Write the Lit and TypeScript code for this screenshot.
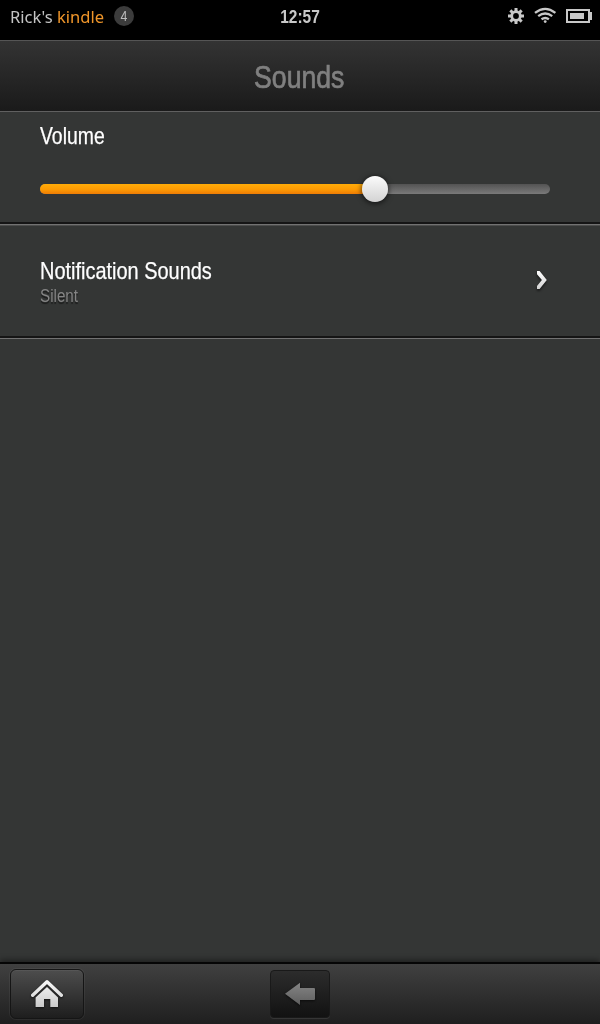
import { LitElement, html, svg, css } from "lit";
import { customElement, property } from "lit/decorators.js";

const CX = 516;
const CY = 16;

const tooth = (degrees: number) => {
  const x = Math.cos((degrees * Math.PI) / 180);
  const y = Math.sin((degrees * Math.PI) / 180);
  return svg`<path d="M${CX + x * 5} ${CY + y * 5}L${CX + x * 8} ${CY + y * 8}"/>`;
};

@customElement("status-bar")
class StatusBar extends LitElement {
  static styles = css`
    :host { display: grid; grid-template-columns: 1fr auto 1fr; height: 40px; background: #000; box-sizing: border-box; }
    .owner { display: flex; align-items: center; height: 33px; padding-left: 10px; font: 17px/33px "Noto Sans", sans-serif; color: #c4c4c4; }
    .name { white-space: pre; width: 104px; transform: scaleX(0.975); transform-origin: left; }
    .brand { color: #f0962a; }
    .count { width: 20px; height: 20px; border-radius: 50%; background: #3c3c3c; color: #bdbdbd; font: 14px/20px "Liberation Sans", sans-serif; text-align: center; margin-top: -1px; }
    .digit { display: inline-block; transform: scaleX(.88); }
    .clock { font: bold 18px/34px "Liberation Sans", sans-serif; color: #c8c8c8; transform: scaleX(0.86); }
    .icons { display: flex; justify-content: flex-end; }
    svg { display: block; }
  `;
  render() {
    return html`
      <div class="owner"><span class="name">Rick's <span class="brand">kindle</span></span><span class="count"><span class="digit">4</span></span></div>
      <div class="clock">12:57</div>
      <div class="icons">
        <svg width="100" height="34" viewBox="500 0 100 34" fill="none" stroke="#c8c8c8">
          <circle cx="516" cy="16" r="4.3" stroke-width="2.8"/>
          <g stroke-width="3">${[0, 45, 90, 135, 180, 225, 270, 315].map(tooth)}</g>
          <path d="M535 12.9Q545.2 4.9 555.4 12.9M538.2 16.2Q545.2 10.8 552.2 16.2M541.5 19.3Q545.2 16.7 548.9 19.3" stroke-width="2.3"/>
          <circle cx="545.2" cy="21.6" r="1.4" fill="#c8c8c8" stroke="none"/>
          <rect x="567" y="10" width="22" height="12" stroke-width="2"/>
          <rect x="570" y="13" width="14" height="6" fill="#c8c8c8" stroke="none"/>
          <rect x="590" y="12" width="2" height="8" fill="#c8c8c8" stroke="none"/>
        </svg>
      </div>`;
  }
}

@customElement("volume-slider")
class VolumeSlider extends LitElement {
  @property({ type: Number }) value = 65.6;
  static styles = css`
    :host { display: block; }
    .track { position: relative; height: 10px; border-radius: 5px; background: linear-gradient(#535353, #7a7a7a); }
    .fill { height: 10px; border-radius: 5px 0 0 5px; background: linear-gradient(#ffac08, #fd9a03 55%, #ee7d05); }
    .knob { position: absolute; top: -8px; width: 26px; height: 26px; margin-left: -13px; border-radius: 50%; background: linear-gradient(#fbfbfb, #d3d3d3); box-shadow: 0 1px 5px 1px rgba(0,0,0,.55); }
  `;
  render() {
    return html`<div class="track"><div class="fill" style="width:${this.value}%"></div><div class="knob" style="left:${this.value}%"></div></div>`;
  }
}

@customElement("nav-bar")
class NavBar extends LitElement {
  static styles = css`
    :host { display: grid; grid-template-columns: 1fr 60px 1fr; height: 62px; box-sizing: border-box; border-top: 2px solid #050505; background: linear-gradient(#404040, #1f1f1f); padding: 5px 10px 5px; box-shadow: 0 -2px 6px rgba(0,0,0,.45); position: relative; }
    .home { width: 74px; height: 50px; box-sizing: border-box; border: 1px solid #151515; border-radius: 6px; background: linear-gradient(#4d4d4d, #1e1e1e); box-shadow: 0 0 0 1px rgba(255,255,255,.05), inset 0 1px rgba(255,255,255,.05); }
    .back { width: 60px; height: 48px; margin-top: 1px; box-sizing: border-box; border: 1px solid #191919; border-radius: 4px; background: linear-gradient(#2c2c2c, #121212); box-shadow: 0 1px rgba(255,255,255,.09); }
    svg { display: block; filter: drop-shadow(0 1px 1px rgba(0,0,0,.6)); }
  `;
  render() {
    return html`
      <div class="home"><svg width="72" height="48" viewBox="11 970 72 48">
        <defs><linearGradient id="h" x1="0" y1="980" x2="0" y2="1007" gradientUnits="userSpaceOnUse"><stop stop-color="#fafafa"/><stop offset="1" stop-color="#cacaca"/></linearGradient></defs>
        <path d="M32.7 995.3L47 981.8L61.3 995.3" fill="none" stroke="url(#h)" stroke-width="3.4" stroke-linecap="round" stroke-linejoin="round"/>
        <path d="M35.6 997.6L47 986.9L58 997.6V1007H50.3V999H44V1007H35.6Z" fill="url(#h)"/>
      </svg></div>
      <div class="back"><svg width="58" height="46" viewBox="271 971 58 46">
        <defs><linearGradient id="b" x1="0" y1="0" x2="0" y2="1"><stop stop-color="#858585"/><stop offset="1" stop-color="#5e5e5e"/></linearGradient></defs>
        <path d="M285 993.8L300 982.7V988H314Q315 988 315 989V999Q315 1000 314 1000H300V1005Z" fill="url(#b)"/>
      </svg></div>`;
  }
}

@customElement("app-root")
class AppRoot extends LitElement {
  static styles = css`
    :host { display: flex; flex-direction: column; width: 600px; height: 1024px; overflow: hidden; background: #343635; font-family: "Liberation Sans", Arial, sans-serif; }
    header { height: 72px; box-sizing: border-box; border-top: 1px solid #555; border-bottom: 1px solid #606060; background: linear-gradient(#333, #1a1a1a); color: #808080; text-align: center; font-size: 32px; line-height: 72px; padding-right: 2px; }
    .squeeze { display: inline-block; white-space: nowrap; transform-origin: left; }
    .heading { transform: scaleX(.832); transform-origin: center; -webkit-text-stroke: .7px #808080; }
    .row { box-sizing: border-box; padding: 0 50px 0 40px; border-bottom: 2px solid #151515; box-shadow: 0 1px #727272; }
    .volume { height: 112px; box-shadow: 0 1px #727272, 0 2px #4c4d4c; }
    .label { font-size: 24px; line-height: 28px; color: #fff; -webkit-text-stroke: .25px #fff; }
    .volume .label { padding: 10px 0 34px; }
    .vol { transform: scaleX(.808); }
    .notif { transform: scaleX(.831); }
    .sub { font-size: 18px; line-height: 22px; color: #858585; text-shadow: 0 2px 1px rgba(0,0,0,.5); }
    .silent { transform: scaleX(.845); }
    .link { height: 114px; display: flex; justify-content: space-between; padding-top: 33px; }
    .chevron { margin: 13px 0 0; filter: drop-shadow(0 2px 1px rgba(0,0,0,.5)); }
    .space { flex: 1; }
  `;
  render() {
    return html`
      <status-bar></status-bar>
      <header><span class="squeeze heading">Sounds</span></header>
      <section class="row volume">
        <div class="label"><span class="squeeze vol">Volume</span></div>
        <volume-slider></volume-slider>
      </section>
      <section class="row link">
        <div>
          <div class="label"><span class="squeeze notif">Notification Sounds</span></div>
          <div class="sub"><span class="squeeze silent">Silent</span></div>
        </div>
        <svg class="chevron" width="14" height="20" viewBox="536 270 14 20">
          <defs><linearGradient id="c" x1="0" y1="0" x2="0" y2="1"><stop stop-color="#fff"/><stop offset="1" stop-color="#d2d2d2"/></linearGradient></defs>
          <path d="M537 271H539.6L546.8 279.9L539.6 289H537V285.9L541.9 279.9L537 274.2Z" fill="url(#c)"/>
        </svg>
      </section>
      <div class="space"></div>
      <nav-bar></nav-bar>`;
  }
}
